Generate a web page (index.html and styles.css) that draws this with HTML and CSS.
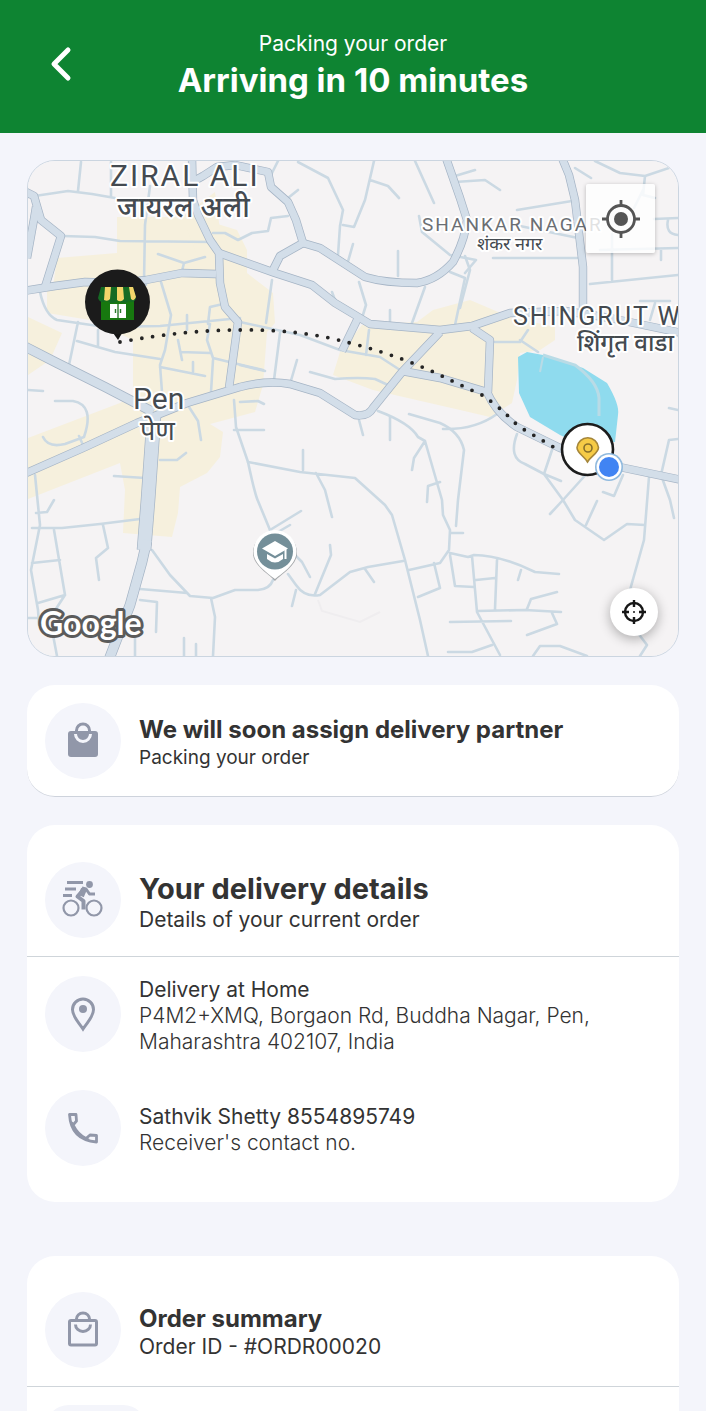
FILE: index.html
```html
<!DOCTYPE html>
<html lang="en">
<head>
<meta charset="utf-8">
<meta name="viewport" content="width=device-width, initial-scale=1">
<title>Order tracking</title>
<link rel="stylesheet" href="styles.css">
</head>
<body>
<div class="app">
  <header class="topbar">
    <button class="back" type="button" aria-label="Back">
      <svg width="26" height="36" viewBox="0 0 26 36"><path d="M19 4 5 18l14 14" fill="none" stroke="#fff" stroke-width="5" stroke-linecap="round" stroke-linejoin="round"/></svg>
    </button>
    <div class="topbar-text">
      <p class="status">Packing your order</p>
      <h1 class="eta">Arriving in 10 minutes</h1>
    </div>
  </header>

  <main class="content">
    <section class="map" aria-label="Delivery map">
      <svg class="map-canvas" viewBox="28 161 650 495">
        <defs>
          <g id="main-roads">
            <path d="M24 191 34 196 41 220 61 236 45 287M36 207 34 219 27 258"/>
            <path d="M24 291 55 286 85 282 120 283 146 280 182 273 216 274"/>
            <path d="M192 158 193 200 198 215 210 240 219 253 220 283 225 307 238 322 229 388"/>
            <path d="M219 253 275 273 312 285 335 303 370 324 440 330 472 326 510 313 565 311 610 318 682 333"/>
            <path d="M194 181 203 176 217 167 235 165 268 172 271 187 288 202 296 220 303 243 280 256 273 270"/>
            <path d="M303 243 320 248 365 277Q385 283 417 283 437 280 453 262 465 240 467 220L460 198 446 158"/>
            <path d="M562 158 569 175 575 200 583 267 583 313"/>
            <path d="M358 318 342 351"/>
            <path d="M440 332 402 372 373 408Q368 417 355 415L320 393 290 384Q267 380 240 387L187 403 137 423 83 448 24 474"/>
            <path d="M402 371 440 378 487 392Q496 413 517 427L560 448 610 465 682 480"/>
            <path d="M472 328 490 340 488 392"/>
          </g>
          <g id="wide-roads">
            <path d="M22 345 57 363 105 387 153 412"/>
          </g>
          <g id="highway">
            <path d="M154 415 148 500 144 550"/>
          </g>
          <g id="highway-south">
            <path d="M147 540 142 562 130 605 108 662"/>
          </g>
        </defs>
        <rect x="28" y="161" width="650" height="495" fill="#f5f3f4"/>
        <g fill="#f6f0dd">
          <path d="M57 258 117 253V217H195L237 230 247 250V273L273 293 275 323 267 332 263 385 255 412 210 424 223 432 220 457 207 473 180 487 178 513 172 537 123 533 125 490 120 463 28 499V438L120 403 133 395V340L90 320 47 313V290L53 287Z"/>
          <path d="M28 317 62 333 50 360 28 375ZM182 217 215 192 220 230 237 240V262H200Z"/>
          <path d="M340 352 362 325 417 322 433 310 470 300 510 317 555 327V340L540 350 520 353 517 380 512 403 490 417 460 410 373 390 333 375Z"/>
        </g>
        <path d="M518 357 527 352 543 355 583 368 607 383Q620 405 618 415L615 442H575L560 435 530 417 519 393Z" fill="#8fdbee"/>
        <g fill="none" stroke="#cbd9e3" stroke-width="2.6" stroke-linecap="round" stroke-linejoin="round">
          <path d="M81 162 78 191M28 197 68 191 92 194 115 198M111 196V162M150 186 145 225 144 282 146 285M63 236 95 237 120 241 215 242M158 254 184 263 205 257M184 263 182 271"/>
          <path d="M40 292Q45 315 57 320L105 327 160 326 240 318M161 282 171 315 165 350 160 365 162 392M187 315V330M208 324 210 307 223 304M210 324 207 340 213 358 250 367 263 370M78 322 69 365M77 341 115 352 160 359M98 330V346M178 340 182 360M181 352 210 353M193 362V372M160 367 205 376M213 360 211 392"/>
          <path d="M213 233 225 233 238 240 252 233 268 231 271 218 288 216M270 177 278 161M298 162 328 178 343 210 340 226 338 255M343 225 354 227 365 200 374 161M370 180 388 186 399 198M288 198 298 190M353 244 347 265M398 251V276M359 282 366 305 362 318M425 287 412 323M390 310V325M272 280 266 323M332 292 335 300M415 161 434 203M419 216 422 232 450 255 476 260 465 273M450 272 465 278 455 325"/>
          <path d="M240 322 300 335 340 350 380 357 400 370M280 333 274 380M297 360 290 384M369 330 366 355M310 372 335 379Q360 377 375 379L388 385M240 365 265 371M234 400 236 427 248 462Q255 495 258 501L270 530 285 545 302 562 310 577"/>
          <path d="M455 182 485 180 500 190M475 170 455 176M517 210 572 201M493 258H577M575 168 591 178M595 161 620 173 645 176 678 165M645 176 643 195 655 198M643 190 634 208M654 219 678 218M668 220Q665 234 678 235M612 234V280M590 284 678 275M600 250 678 248M661 249V260M640 301H670M655 303 650 320M578 238 520 226M465 256 470 270 460 308"/>
          <path d="M28 390 43 391M55 401H73Q95 405 84 437L65 444Q48 448 43 437M79 436 83 445M189 407 198 421 201 440M160 460 177 460 186 453M114 476 145 478M35 475 40 525 31 570 38 610 39 625 50 618 65 595 54 530M32 528 62 528 100 524 140 519M36 513 47 512 54 500M32 563 60 560M38 603 65 595M103 525 108 548 96 558 99 580M28 618H40M53 635 57 656M152 550 170 575 190 596 213 598 235 590 258 590Q270 589 273 580M140 589 187 593M140 600 157 602 156 632M211 598 215 617 213 656M135 620V656M184 638V656M196 644V656"/>
          <path d="M240 402 258 401 264 404M234 430H264M248 462 300 472 355 478 385 505 392 515 405 560 420 620 428 656M303 450V470M316 473 325 490 332 517M270 530 301 511M278 532 290 525M288 574 296 585Q305 598 320 595L350 572 368 567 403 561M296 590 292 606M330 545 331 555 315 594M365 569 374 582M359 420 363 435M378 411Q410 423 418 437L425 441 442 500 443 515 450 530 449 550 440 563 409 570M425 441 414 458 412 470M440 482 428 486 427 502M390 416V440M409 414 440 423Q460 432 464 450L458 500 456 526M450 533 463 533M434 563 440 588 418 597M450 553 468 557 474 555Q500 555 535 572L559 574M450 555 455 586 474 587M472 556 477 612 500 655M497 560 495 609M476 580 495 578M521 570 518 580M477 611 525 610 561 612M527 609 531 599 557 592M552 613 557 624 527 635M450 622 511 621M448 652 472 652 492 645M533 656 540 646 560 646 587 656"/>
          <path d="M443 429Q475 430 497 414M495 342H520L528 330M520 340 538 352M517 434Q508 458 525 464L544 474 561 481M552 450 544 474 563 500 575 520 604 540 627 524 645 525M590 470 563 500 550 514M597 501 586 525M603 492 614 496 623 475M649 477 644 540 630 590 628 620 647 645 640 656M678 439 669 440 661 475 670 500 674 518M669 408 678 410"/>
        </g>
        <path d="M543 355 575 365Q598 382 599 398V416" fill="none" stroke="#b9dbe6" stroke-width="3"/>
        <path d="M543 357 540 372" stroke="#b9dbe6" stroke-width="2"/>
        <path d="M318 600 322 611 360 622 380 612" fill="none" stroke="#efedef" stroke-width="2"/>
        <path d="M662 656Q673 652 678 640V656Z" fill="#cbd9e3"/>
        <g fill="none" stroke-linejoin="round">
          <g stroke="#a5b4c5">
            <use href="#main-roads" stroke-width="8.4"/><use href="#wide-roads" stroke-width="10"/><use href="#highway" stroke-width="14.6"/><use href="#highway-south" stroke-width="10.6"/>
          </g>
          <g stroke="#d3dee9">
            <use href="#main-roads" stroke-width="7"/><use href="#wide-roads" stroke-width="8.6"/><use href="#highway" stroke-width="13.2"/><use href="#highway-south" stroke-width="9.2"/>
          </g>
        </g>
        <path d="M120 342Q185 330 240 330 300 329 350 343 405 357 450 380L482 395Q500 407 518 426L562 452" fill="none" stroke="#252525" stroke-width="3.8" stroke-linecap="round" stroke-dasharray="0 11"/>

        <g class="place-names">
          <text class="area-lg" x="110" y="186">ZIRAL ALI</text>
          <text class="area-hi-lg" x="117" y="217">जायरल अली</text>
          <text class="area-sm" x="422" y="231">SHANKAR NAGAR</text>
          <text class="area-hi-sm" x="477" y="250">शंकर नगर</text>
          <text class="area-md" x="513" y="325">SHINGRUT W</text>
          <text class="area-hi" x="577" y="351">शिंगृत वाडा</text>
          <text class="town" x="133" y="409">Pen</text>
          <text class="town-hi" x="140" y="440">पेण</text>
        </g>

        <g>
          <path d="M111 330 118 340 124 330Z" fill="#151515"/>
          <circle cx="117.500" cy="302" r="32.500" fill="#1b1b1b"/>
          <path d="M101 298H134V320H101Z" fill="#17780f"/>
          <path d="M101 287H133L136 298Q134 304 129 301 124 305 118 301 112 305 107 301 100 304 98 298Z" fill="#146b23"/>
          <path d="M105 287H111L110 299Q108 302 104 300ZM117 287H123L124 299Q121 303 117 300ZM129 287H133L136 297Q134 302 131 299Z" fill="#f3d56b"/>
          <rect x="110" y="304" width="16" height="14" fill="#fff"/>
          <path d="M118 304V318M115.500 309V313M120.500 309V313" stroke="#2c7a2c" stroke-width="1.400"/>
        </g>

        <g>
          <path d="M275 581C269 574 253 566 253 553A22 22 0 0 1 297 553C297 566 281 574 275 581Z" fill="#85898b" opacity=".7"/>
          <path d="M275 579C266 572 253.500 564 253.500 551.500A21.500 21.500 0 0 1 296.500 551.500C296.500 564 284 572 275 579Z" fill="#fff"/>
          <circle cx="275" cy="551.500" r="18" fill="#748f99"/>
          <path d="M262 548.500 275 541 288 548.500 275 556ZM267 554 275 558.500 283 554V559Q275 566 267 559Z" fill="#fff"/>
          <path d="M285.500 549V559" stroke="#fff" stroke-width="2"/>
        </g>

        <g>
          <circle cx="587.500" cy="449.500" r="25.500" fill="#fff" stroke="#1c1c1c" stroke-width="2.600"/>
          <path d="M587.500 462C584 456 577 453 577 447.500A10.800 10.800 0 0 1 598.500 447.500C598.500 453 591 456 587.500 462Z" fill="#f6cb46" stroke="#a5863a" stroke-width="1.600"/>
          <circle cx="588" cy="448" r="4" fill="none" stroke="#87702c" stroke-width="1.600"/>
          <circle cx="609" cy="467" r="14" fill="#8fb9de"/>
          <circle cx="609" cy="467" r="12.400" fill="#fff"/>
          <circle cx="609" cy="467" r="10" fill="#4184f3"/>
        </g>
        <text class="provider" x="40" y="635">Google</text>
      </svg>
      <button class="locate" type="button" aria-label="My location">
        <svg width="40" height="40" viewBox="0 0 40 40" fill="none" stroke="#555" stroke-width="2.800"><circle cx="20" cy="20" r="13.500"/><path d="M20 1V7M20 33V39M1 20H7M33 20H39"/><circle cx="20" cy="20" r="7" fill="#555" stroke="none"/></svg>
      </button>
      <button class="recenter" type="button" aria-label="Recenter map">
        <svg width="26" height="26" viewBox="0 0 26 26" fill="none" stroke="#171717" stroke-width="2.400"><circle cx="13" cy="13" r="9"/><path d="M13 1V8M13 18V25M1 13H8M18 13H25"/><circle cx="13" cy="13" r="1" fill="#171717" stroke="none"/></svg>
      </button>
    </section>

    <section class="card card-status">
      <div class="row">
        <span class="badge"><svg width="40" height="40" viewBox="0 0 40 40"><path d="M13.500 12V9.500a6.500 6.500 0 0 1 13 0V12" fill="none" stroke="#9197a9" stroke-width="3"/><rect x="5" y="10" width="30" height="26" rx="3" fill="#9197a9"/><path d="M12.500 13a7.500 7.500 0 0 0 15 0" fill="none" stroke="#f4f5fb" stroke-width="3"/></svg></span>
        <div class="text">
          <h2 class="title">We will soon assign delivery partner</h2>
          <p class="note">Packing your order</p>
        </div>
      </div>
    </section>

    <section class="card">
      <div class="row row-head">
        <span class="badge"><svg width="42" height="40" viewBox="0 0 42 40" fill="none" stroke="#9197a9"><g stroke-width="2.200"><circle cx="9" cy="28" r="7.500"/><circle cx="32" cy="28" r="7.500"/></g><circle cx="27.500" cy="4.500" r="3.400" fill="#9197a9" stroke="none"/><path d="M5 2.500H21M3 9H14M1 15.500H10" stroke-width="3"/><path d="M22.500 8.500 15.500 16.500 21.500 21V29.500" stroke-width="4" stroke-linejoin="round"/><path d="M20 8 24 9 27.500 14H33" stroke-width="3" stroke-linejoin="round"/><path d="M22 9 19 16" stroke-width="6"/></svg></span>
        <div class="text">
          <h2 class="title title-lg">Your delivery details</h2>
          <p class="line">Details of your current order</p>
        </div>
      </div>
      <div class="details">
        <div class="row">
          <span class="badge"><svg width="40" height="40" viewBox="0 0 40 40"><path d="M20 35C16 28.500 9.500 23 9.500 15.500a10.500 10.500 0 0 1 21 0C30.500 23 24 28.500 20 35Z" fill="none" stroke="#9197a9" stroke-width="3"/><circle cx="20" cy="15" r="4" fill="#9197a9"/></svg></span>
          <div class="text">
            <h3 class="line">Delivery at Home</h3>
            <p class="line light">P4M2+XMQ, Borgaon Rd, Buddha Nagar, Pen, Maharashtra 402107, India</p>
          </div>
        </div>
        <div class="row">
          <span class="badge"><svg width="40" height="40" viewBox="0 0 40 40"><path d="M6.500 6.500H13L13.500 13 10 17Q15 27 23 30.500L27 27 33.500 27.500V34Q8 32 6.500 6.500Z" fill="none" stroke="#9197a9" stroke-width="2.800" stroke-linejoin="round"/><path d="M8.500 14Q12 28 26 32" fill="none" stroke="#9197a9" stroke-width="2.600"/></svg></span>
          <div class="text">
            <h3 class="line">Sathvik Shetty 8554895749</h3>
            <p class="line light">Receiver's contact no.</p>
          </div>
        </div>
      </div>
    </section>

    <section class="card card-summary">
      <div class="row row-head">
        <span class="badge"><svg width="40" height="40" viewBox="0 0 40 40" fill="none" stroke="#9197a9" stroke-width="3"><rect x="6.500" y="10.500" width="27" height="24.500" rx="1.500"/><path d="M13.500 10.500V9a6.500 6 0 0 1 13 0V10.500M12.500 14.500a7.500 7 0 0 0 15 0"/></svg></span>
        <div class="text">
          <h2 class="title">Order summary</h2>
          <p class="line">Order ID - #ORDR00020</p>
        </div>
      </div>
      <div class="items"><div class="thumb"></div></div>
    </section>
  </main>
</div>
</body>
</html>
```
FILE: styles.css
```css
* { box-sizing: border-box; }
body { margin: 0; background: #f4f5fb; color: #333; font-family: Inter, "Noto Sans", sans-serif; }
h1, h2, h3, p { margin: 0; }
button { padding: 0; border: 0; cursor: pointer; display: grid; place-items: center; }
svg { display: block; }

.app { height: 100vh; display: flex; flex-direction: column; }
.topbar { flex: none; display: grid; grid-template-columns: 76px 1fr 76px; align-items: center; padding: 28px 24px 33px; background: #0e8432; color: #fff; }
.back { width: 76px; height: 44px; background: none; }
.topbar-text { text-align: center; }
.status { font-size: 21px; line-height: 32px; }
.eta { font-size: 33px; line-height: 40px; font-weight: 700; white-space: nowrap; }

.content { flex: 1; min-height: 0; overflow-y: auto; scrollbar-width: none; padding: 27px; display: flex; flex-direction: column; gap: 28px; }
.content > * { flex: none; }

.map { position: relative; border: 1px solid #cbd5e0; border-radius: 28px; overflow: hidden; }
.map-canvas { width: 100%; height: auto; }
.locate { position: absolute; top: 23px; right: 23px; width: 69px; height: 69px; border-radius: 2px; background: rgba(255, 255, 255, .8); box-shadow: 0 1px 4px rgba(0, 0, 0, .25); }
.recenter { position: absolute; right: 20px; bottom: 20px; width: 48px; height: 48px; border-radius: 50%; background: #fff; box-shadow: 0 3px 12px rgba(0, 0, 0, .3); }

.place-names text { font-family: Roboto, "Noto Sans", sans-serif; fill: #444a50; stroke: #fff; stroke-width: 4px; stroke-linejoin: round; paint-order: stroke; }
.place-names .area-lg { font-size: 30px; letter-spacing: 2px; }
.place-names .area-md { font-size: 25px; letter-spacing: 2px; }
.place-names .area-sm { font-size: 19px; letter-spacing: 2px; fill: #6b6f74; }
.place-names .area-hi { font-size: 24px; font-weight: 500; }
.place-names .area-hi-lg { font-size: 28px; font-weight: 500; }
.place-names .area-hi-sm { font-size: 18px; }
.place-names .town { font-size: 30px; }
.place-names .town-hi { font-size: 27px; }
.provider { font-family: Lato, sans-serif; font-size: 32px; font-weight: 700; fill: #fff; stroke: #5b5b5b; stroke-width: 6px; stroke-linejoin: round; paint-order: stroke; }

.card { background: #fff; border-radius: 28px; overflow: hidden; }
.card-status { padding: 18px 18px 17px; border-bottom: 1px solid #ced3dc; }
.row { display: flex; align-items: center; gap: 18px; }
.row-head { padding: 37px 18px 18px; border-bottom: 1px solid #cfd5da; }
.badge { flex: none; width: 76px; height: 76px; border-radius: 50%; background: #f4f5fb; display: grid; place-items: center; }
.text { flex: 1; min-width: 0; padding-top: 4px; }
.title { font-size: 24px; line-height: 30px; font-weight: 700; }
.title-lg { font-size: 29px; line-height: 36px; }
.note { font-size: 19px; line-height: 26px; }
.line { font-size: 21px; line-height: 26px; font-weight: 400; }
.light { font-weight: 300; }
.details { padding: 16px 18px 36px; display: grid; gap: 35px; }
.card-summary { margin-top: 26px; }
.card-summary .row-head { padding-top: 36px; }
.items { padding: 18px; }
.thumb { width: 102px; height: 102px; border-radius: 24px; background: #f4f5fb; }
```
